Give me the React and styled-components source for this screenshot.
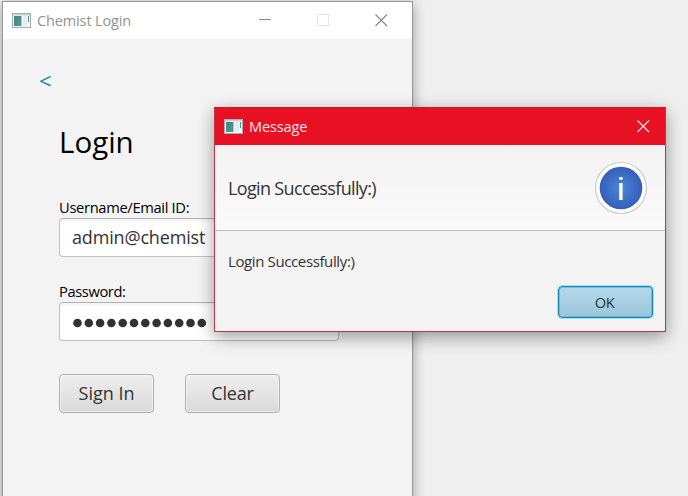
import React from "react";
import styled, { createGlobalStyle } from "styled-components";

const Global = createGlobalStyle`
  *, *::before, *::after { box-sizing: border-box; }
  html, body { margin: 0; height: 100%; overflow: hidden; }
  body { background: #efefef; }
`;

const Desktop = styled.main`
  position: relative;
  width: 688px;
  height: 496px;
  overflow: hidden;
  background: #efefef;
  font-family: "Open Sans", "Noto Sans", sans-serif;
`;

const LoginWindow = styled.section`
  position: absolute;
  left: 2px;
  top: 1px;
  width: 411px;
  height: 520px;
  border: 1px solid #969696;
  background: #f3f3f3;
  box-shadow: 0 3px 12px rgba(0, 0, 0, 0.36);
`;

const Dialog = styled.section`
  position: absolute;
  left: 214px;
  top: 107px;
  width: 452px;
  height: 225px;
  border: 1px solid #bf3545;
  border-top-color: #c81828;
  background: #f3f3f3;
  box-shadow: 0 5px 16px rgba(0, 0, 0, 0.38);
`;

const TitleBar = styled.header`
  display: flex;
  align-items: center;
  height: 37px;
  padding-left: 9px;
  background: ${(p) => (p.$alert ? "#e81123" : "#ffffff")};
  color: ${(p) => (p.$alert ? "#fbe3e5" : "#929292")};
  svg { display: block; flex: none; }
`;

const Label = styled.span`
  display: block;
  white-space: nowrap;
  font-size: ${(p) => p.$size}px;
  line-height: ${(p) => p.$line || 20}px;
  letter-spacing: ${(p) => p.$track || 0}px;
`;

const Title = styled(Label)`
  flex: 1;
  margin-left: 6px;
`;

const Controls = styled.div`
  display: flex;
  gap: 45px;
  margin-right: ${(p) => p.$right}px;
`;

const Form = styled.div`
  padding: 29px 0 0 56px;
  color: #000;
`;

const Back = styled.a`
  display: block;
  width: 20px;
  margin-left: -20px;
  font-size: 22px;
  line-height: 24px;
  color: #1288ae;
`;

const Heading = styled.h1`
  margin: 30px 0 35px;
  font-size: 29.5px;
  font-weight: 400;
  line-height: 40px;
  letter-spacing: ${(p) => p.$track}px;
`;

const Field = styled.div`
  display: flex;
  align-items: center;
  width: 280px;
  height: 39px;
  margin: 1px 0 24px;
  padding: 0 0 1px 12px;
  border: 1px solid #c0c0c0;
  border-top-color: #b0b0b0;
  border-radius: 4px;
  background: linear-gradient(#f3f3f3, #fff 5px);
  color: #323232;
`;

const Mask = styled.svg`
  display: block;
  margin-top: 4px;
`;

const Actions = styled.div`
  display: flex;
  gap: 31px;
  padding-top: 9px;
`;

const Button = styled.button`
  display: flex;
  align-items: center;
  justify-content: center;
  width: 95px;
  height: 39px;
  padding: 0 0 1px;
  border: 1px solid #b0b0b0;
  border-radius: 4px;
  background: linear-gradient(#eeeeee, #d9d9d9);
  box-shadow: inset 0 0 0 1px rgba(255, 255, 255, 0.5);
  color: #333;
  font-family: inherit;
`;

const OkButton = styled(Button)`
  height: 32px;
  padding: 0 2px 1px 0;
  border-color: #178bb5;
  background: linear-gradient(#b3d8ea, #9cc5d9);
  box-shadow: 0 0 0 1px rgba(70, 190, 230, 0.45), inset 0 0 0 1px rgba(40, 175, 220, 0.55);
  color: #24353d;
`;

const DialogHeader = styled.div`
  display: flex;
  align-items: center;
  justify-content: space-between;
  height: 86px;
  padding: 0 17px 0 13px;
  border-bottom: 1px solid #bfbfbf;
  background: linear-gradient(#f2f2f2, #fafafa);
  color: #333;
`;

const DialogBody = styled.div`
  display: flex;
  flex-direction: column;
  padding: 20px 12px 0 13px;
  color: #333;
`;

const DialogActions = styled.div`
  display: flex;
  justify-content: flex-end;
  padding-top: 15px;
`;

const AppIcon = () => (
  <svg width="19" height="16" viewBox="0 0 19 16">
    <defs>
      <linearGradient id="pane" x1="0" y1="0" x2="1" y2="1">
        <stop offset="0" stopColor="#437d9b" />
        <stop offset="1" stopColor="#55a078" />
      </linearGradient>
    </defs>
    <rect x=".5" y=".5" width="18" height="14" fill="#f5f7f9" stroke="#a4adb7" />
    <rect x="1" y="1" width="17" height="1.5" fill="#c9d1da" />
    <rect x="2" y="3" width="7.5" height="10" fill="url(#pane)" />
    <rect x="11" y="3" width="4" height="10" fill="#e7ecef" />
    <rect x="16" y="3" width="1" height="6" fill="#548d8c" />
  </svg>
);

const CloseIcon = ({ color }) => (
  <svg width="13" height="13" viewBox="0 0 13 13">
    <path d="M.5.5l11.5 11.5M12 .5l-11.5 11.5" stroke={color} strokeWidth="1.1" fill="none" />
  </svg>
);

const InfoIcon = () => (
  <svg width="54" height="54" viewBox="0 0 54 54">
    <defs>
      <radialGradient id="disc">
        <stop offset="0" stopColor="#4a87dc" />
        <stop offset="1" stopColor="#355fb9" />
      </radialGradient>
    </defs>
    <circle cx="27" cy="27" r="25.5" fill="#fff" stroke="#cdcdcd" strokeWidth="1.2" />
    <circle cx="27" cy="27" r="21.3" fill="url(#disc)" />
    <rect x="25.2" y="16" width="3.4" height="2.8" rx=".6" fill="#fff" />
    <rect x="25.2" y="22" width="3.4" height="17" rx=".4" fill="#fff" />
  </svg>
);

export default function App() {
  return (
    <>
      <Global />
      <Desktop>
        <LoginWindow>
          <TitleBar>
            <AppIcon />
            <Title $size={14.5} $track={-0.13}>Chemist Login</Title>
            <Controls $right={24}>
              <svg width="13" height="13" viewBox="0 0 13 13">
                <path d="M0 5.5h12" stroke="#8a8a8a" />
              </svg>
              <svg width="13" height="13" viewBox="0 0 13 13">
                <rect x=".5" y=".5" width="11" height="11" fill="none" stroke="#e6e6e6" />
              </svg>
              <CloseIcon color="#858585" />
            </Controls>
          </TitleBar>
          <Form>
            <Back>&lt;</Back>
            <Heading $track={0}>Login</Heading>
            <Label $size={14.7} $track={-0.33}>Username/Email ID:</Label>
            <Field>
              <Label $size={18} $track={-0.17} $line={24}>admin@chemist</Label>
            </Field>
            <Label $size={14.7} $track={-0.4}>Password:</Label>
            <Field>
              <Mask width="136" height="10" viewBox="0 0 136 10">
                {Array.from({ length: 12 }, (_, i) => (
                  <circle key={i} cx={5.5 + i * 11.3} cy="5" r="4.3" fill="#323232" />
                ))}
              </Mask>
            </Field>
            <Actions>
              <Button><Label $size={18} $track={0} $line={24}>Sign In</Label></Button>
              <Button><Label $size={18} $track={-0.2} $line={24}>Clear</Label></Button>
            </Actions>
          </Form>
        </LoginWindow>
        <Dialog>
          <TitleBar $alert>
            <AppIcon />
            <Title $size={14.5} $track={-0.13}>Message</Title>
            <Controls $right={15}><CloseIcon color="#ffe9eb" /></Controls>
          </TitleBar>
          <DialogHeader>
            <Label $size={18} $track={-0.65} $line={24}>Login Successfully:)</Label>
            <InfoIcon />
          </DialogHeader>
          <DialogBody>
            <Label $size={15} $track={-0.38}>Login Successfully:)</Label>
            <DialogActions>
              <OkButton><Label $size={14.7} $track={-0.5}>OK</Label></OkButton>
            </DialogActions>
          </DialogBody>
        </Dialog>
      </Desktop>
    </>
  );
}
